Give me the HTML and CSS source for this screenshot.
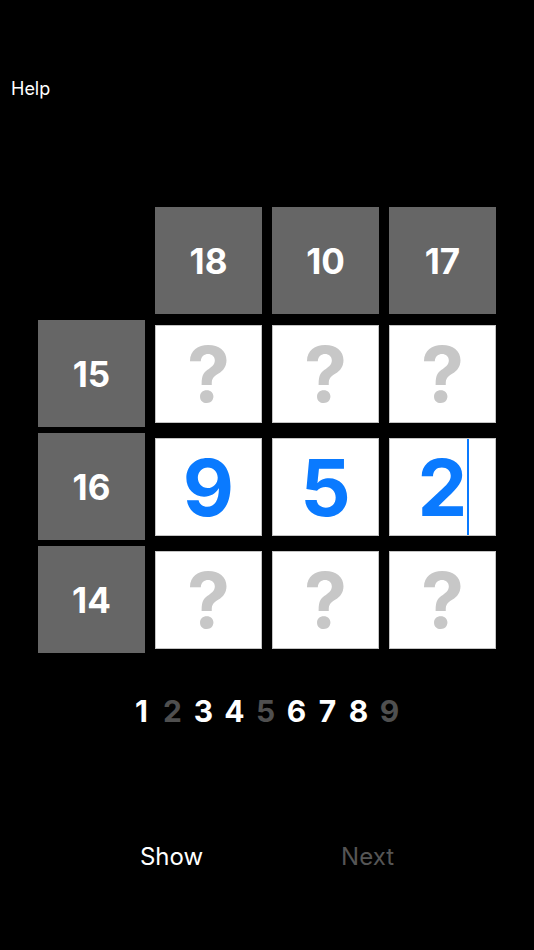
FILE: index.html
```html
<!DOCTYPE html>
<html>
<head>
<meta charset="utf-8">
<link rel="stylesheet" href="styles.css">
</head>
<body>
<div class="help">Help</div>
<div class="board">
  <div class="empty"></div>
  <div class="clue">18</div>
  <div class="clue">10</div>
  <div class="clue">17</div>

  <div class="clue">15</div>
  <div class="cell unknown">?</div>
  <div class="cell unknown">?</div>
  <div class="cell unknown">?</div>

  <div class="clue">16</div>
  <div class="cell filled">9</div>
  <div class="cell filled">5</div>
  <div class="cell filled active"><span class="val">2</span><span class="cursor"></span></div>

  <div class="clue">14</div>
  <div class="cell unknown">?</div>
  <div class="cell unknown">?</div>
  <div class="cell unknown">?</div>
</div>
<div class="digits">
  <span class="d">1</span><span class="d used">2</span><span class="d">3</span><span class="d">4</span><span class="d used">5</span><span class="d">6</span><span class="d">7</span><span class="d">8</span><span class="d used">9</span>
</div>
<div class="actions">
  <span class="btn">Show</span>
  <span class="btn disabled">Next</span>
</div>
</body>
</html>
```
FILE: styles.css
```css
html, body {
  margin: 0;
  padding: 0;
  background: #000;
}
body {
  width: 534px;
  height: 950px;
  overflow: hidden;
  font-family: Inter, "Liberation Sans", Arial, sans-serif;
  color: #fff;
}
.help {
  padding: 78px 0 0 11px;
  font-size: 18px;
  line-height: 22px;
}
.board {
  margin: 107px 0 0 38px;
  display: grid;
  grid-template-columns: repeat(4, 107px);
  grid-template-rows: repeat(4, 107px);
  column-gap: 10px;
  row-gap: 6px;
  font-weight: 700;
}
.clue {
  background: #666;
  color: #fff;
  font-size: 35px;
  display: flex;
  align-items: center;
  justify-content: center;
}
.cell {
  align-self: center;
  height: 98px;
  box-sizing: border-box;
  background: #fff;
  border: 1px solid #c4c4c4;
  display: flex;
  align-items: center;
  justify-content: center;
}
.unknown {
  color: #c7c7c7;
  font-size: 77px;
}
.filled {
  color: #0a7aff;
  font-size: 79px;
}
.active {
  align-items: stretch;
}
.active .val {
  display: flex;
  align-items: center;
}
.cursor {
  width: 2px;
  margin-right: -2px;
  background: #0a7aff;
}
.digits {
  margin-top: 40px;
  padding-right: 3px;
  display: flex;
  justify-content: center;
  font-weight: 700;
  font-size: 30px;
  line-height: 36px;
}
.d {
  width: 31px;
  text-align: center;
  color: #fff;
}
.d.used {
  color: #4f4f4f;
}
.actions {
  margin-top: 114px;
  display: flex;
  justify-content: center;
  gap: 138px;
  font-size: 24px;
  line-height: 28px;
}
.btn.disabled {
  color: #555;
}
```
